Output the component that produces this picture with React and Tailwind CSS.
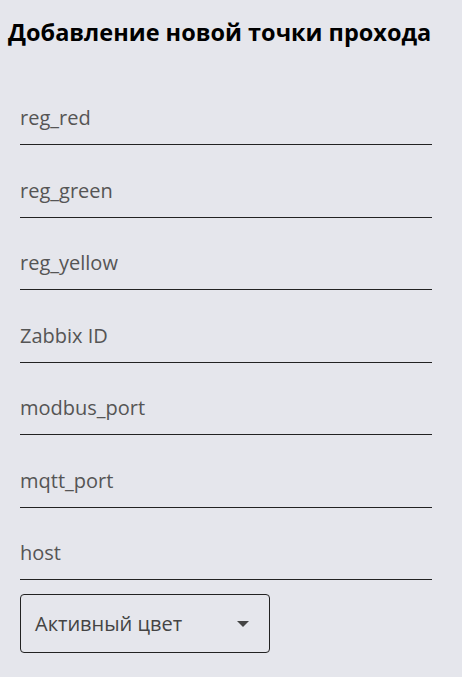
import { useState } from 'react';

const fields = ['reg_red', 'reg_green', 'reg_yellow', 'Zabbix ID', 'modbus_port', 'mqtt_port', 'host'];

function Field({ label }) {
  const [value, setValue] = useState('');
  return (
    <label className="flex h-[72.5px] items-end border-b border-[#222] pb-[13px]">
      <input
        value={value}
        onChange={(e) => setValue(e.target.value)}
        placeholder={label}
        className="w-full bg-transparent text-[20px] leading-[26px] text-[#333] placeholder-[#555] outline-none"
      />
    </label>
  );
}

export default function App() {
  return (
    <div className="min-h-screen bg-[#e5e6ec] font-['Open_Sans',sans-serif]">
      <h1 className="px-2 pt-[17px] text-[23.5px] font-bold leading-[30px] text-black">
        Добавление новой точки прохода
      </h1>
      <form className="mt-[25.5px] w-[432px] pl-5">
        {fields.map((f) => (
          <Field key={f} label={f} />
        ))}
        <div className="mt-[14px] flex h-[59px] w-[250px] items-center justify-between rounded-[4px] border border-[#222] pl-[14px] pr-[20px]">
          <span className="text-[20px] text-[#444]">Активный цвет</span>
          <svg width="12" height="6" viewBox="0 0 12 6">
            <path d="M0 0h12L6 6z" fill="#444" />
          </svg>
        </div>
      </form>
    </div>
  );
}
